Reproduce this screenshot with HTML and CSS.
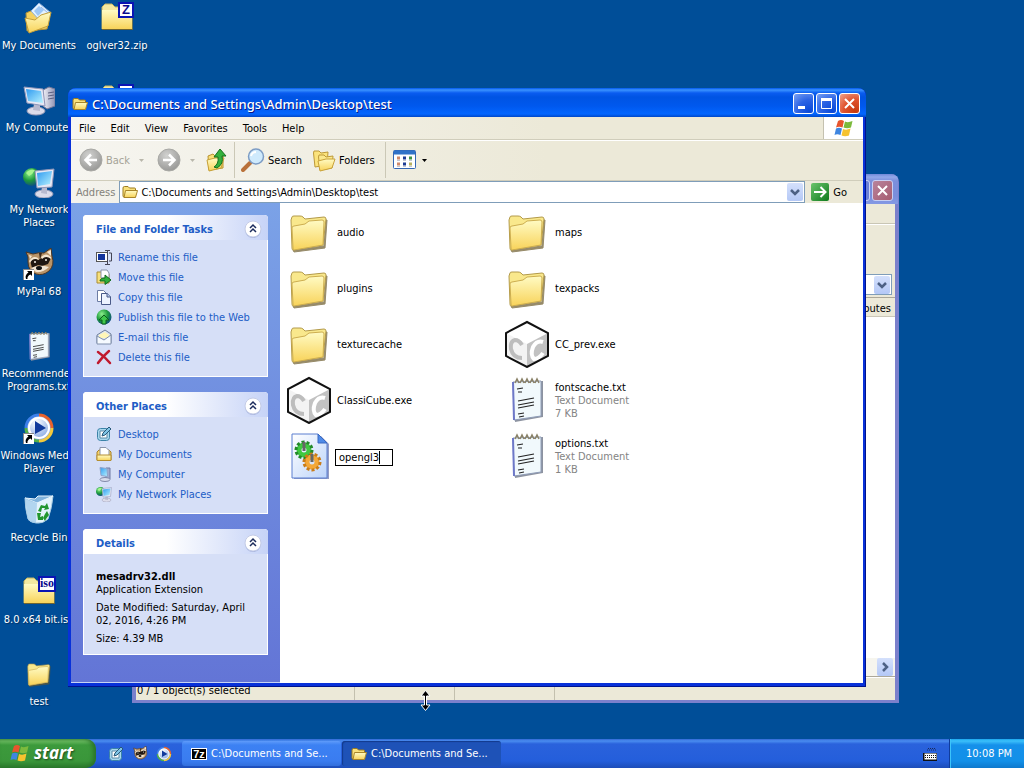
FILE: index.html
```html
<!DOCTYPE html>
<html lang="en">

	<head>
		<meta charset="utf-8" />
		<title>C:\Documents and Settings\Admin\Desktop\test</title>
		<link rel="stylesheet" href="styles.css">
	</head>

	<body>
		<!-- shared icons -->
		<svg class="defs" aria-hidden="true">
			<defs>
				<linearGradient id="gFolder" x1="0" y1="0" x2="0" y2="1">
					<stop offset="0" stop-color="#fffbc4" />
					<stop offset="1" stop-color="#f8d35a" />
				</linearGradient>
				<linearGradient id="gScreen" x1="0" y1="0" x2="1" y2="1">
					<stop offset="0" stop-color="#2f9af0" />
					<stop offset="1" stop-color="#b6f2ff" />
				</linearGradient>
				<linearGradient id="gCase" x1="0" y1="0" x2="1" y2="0">
					<stop offset="0" stop-color="#f2f2f8" />
					<stop offset="1" stop-color="#9094b4" />
				</linearGradient>
				<linearGradient id="gPage" x1="0" y1="0" x2="1" y2="1">
					<stop offset="0" stop-color="#ffffff" />
					<stop offset="1" stop-color="#bcd4fa" />
				</linearGradient>
				<linearGradient id="gGo" x1="0" y1="0" x2="1" y2="1">
					<stop offset="0" stop-color="#6cc46c" />
					<stop offset="1" stop-color="#0d7a1c" />
				</linearGradient>
				<radialGradient id="gGlobe" cx="0.35" cy="0.3" r="0.8">
					<stop offset="0" stop-color="#8cf08c" />
					<stop offset="0.5" stop-color="#1e9a3c" />
					<stop offset="1" stop-color="#0c3f8c" />
				</radialGradient>
				<radialGradient id="gGrey" cx="0.4" cy="0.3" r="0.8">
					<stop offset="0" stop-color="#d2d2d0" />
					<stop offset="1" stop-color="#929290" />
				</radialGradient>
				<radialGradient id="gBall" cx="0.4" cy="0.3" r="0.7">
					<stop offset="0" stop-color="#ffffff" />
					<stop offset="1" stop-color="#7a9fe0" />
				</radialGradient>
			</defs>

			<symbol id="folder" viewBox="0 0 48 48">
				<path d="M8 42 L39 38 L41 12 L42 12 L40 40 L9 44z" fill="#6b5a2a" stroke="#6b5a2a" opacity="0.7" />
				<path d="M6 12 L7 9 Q7 8 9 8 L15 8 Q17 8 18 9 L20 11 L39 9 Q41 9 41 11 L38 37 L8 42 Q7 42 7 40z" fill="#f9e88c" stroke="#b39a4a" />
				<path d="M7 20 Q7 18 9 18 L20 16 L24 13 L37 12 Q39 12 39 14 L38 37 L9 42 Q8 42 8 40z" fill="url(#gFolder)" stroke="#cdae50" />
			</symbol>

			<symbol id="folder-s" viewBox="0 0 16 16">
				<path d="M1 4 Q1 2.500 2.500 2.500 H6 L7.500 4 H12.500 Q13.500 4 13.500 5 V13 H2 Q1 13 1 12z" fill="#f9e07a" stroke="#9b7a1e" />
				<path d="M3.500 6.500 H15.500 L13.500 13.500 H2z" fill="url(#gFolder)" stroke="#a8852a" />
			</symbol>

			<symbol id="cube" viewBox="0 0 48 48">
				<path d="M24 2 L45 13 V36 L24 47 L3 36 V13z" fill="#fff" />
				<path d="M24 24 L45 13 V36 L24 47z" fill="#c2c2c2" />
				<path d="M3 13 L24 24 V47 L3 36z" fill="#f3f3f3" />
				<path d="M19 25 Q16 20 12 20 Q7 21 8 29 Q10 38 19 38" fill="none" stroke="#bdbdbd" stroke-width="4" />
				<path d="M40 22 Q34 20 30 27 Q27 35 31 39 Q36 39 40 33" fill="none" stroke="#fff" stroke-width="4" />
				<path d="M24 2 L45 13 V36 L24 47 L3 36 V13z" fill="none" stroke="#111" stroke-width="2" />
			</symbol>

			<symbol id="notepad" viewBox="0 0 48 48">
				<path d="M11 6 L40 5 V41 L12 46z" fill="#8d93a0" />
				<path d="M10 6 L38 5 L38 40 L11 44z" fill="#f1f9fc" stroke="#8f9db8" />
				<path d="M10 6 L11 44" stroke="#6d78c8" stroke-width="2" />
				<path d="M12 7 l2-4 l2 4 M17 7 l2-4 l2 4 M22 7 l2-4 l2 4 M27 7 l2-4 l2 4 M32 7 l2-4 l2 4" fill="none" stroke="#8a8268" stroke-width="1.500" />
				<path d="M14 13l6-1M15 16h4M15 25l16-3M15 29l16-3M15 32l16-3M15 38l6-1M16 41l5-1" stroke="#222" stroke-width="1.200" />
			</symbol>

			<symbol id="dll" viewBox="0 0 48 48">
				<path d="M9 4 H36 L44 12 V47 H9z" fill="#4a5aa0" opacity="0.6" />
				<path d="M7 2 H33 L42 11 V46 H7z" fill="url(#gPage)" stroke="#5b7ed0" />
				<path d="M33 2 V11 H42z" fill="#4f8be8" stroke="#3a68c0" />
				<circle cx="19" cy="18" r="5" fill="none" stroke="#3fc840" stroke-width="5" />
				<circle cx="19" cy="18" r="8" fill="none" stroke="#228a28" stroke-width="3" stroke-dasharray="3 2" />
				<circle cx="27" cy="30" r="5" fill="none" stroke="#f4a838" stroke-width="5" />
				<circle cx="27" cy="30" r="8" fill="none" stroke="#c97c18" stroke-width="3" stroke-dasharray="3 2" />
				<path d="M19 10v9M27 22v8" stroke="#666" stroke-width="3" />
			</symbol>

			<symbol id="computer" viewBox="0 0 32 32">
				<path d="M20 6 L26 3 L32 5 V22 L24 25 L20 22z" fill="url(#gCase)" stroke="#74789a" />
				<path d="M25 9l6-1M25 12l6-1M25 15l6-1" stroke="#5c6080" />
				<ellipse cx="13" cy="27" rx="9" ry="4" fill="#dcdcea" stroke="#9a9cb8" />
				<path d="M11 20 L17 21 L17 27 L10 26z" fill="#b8bacf" />
				<path d="M1 3 L20 5 L22 22 L4 19z" fill="#e6e8f4" stroke="#9096b8" />
				<path d="M3 5 L18 7 L20 19 L5 17z" fill="url(#gScreen)" />
			</symbol>

			<symbol id="computer-s" viewBox="0 0 16 16">
				<path d="M10 2h4v11h-4z" fill="#a3acd0" stroke="#6f7aa4" />
				<ellipse cx="9" cy="13.500" rx="5" ry="2" fill="#d8dcec" stroke="#8088a8" />
				<path d="M4 1.500 L11 2.500 L11.500 10.500 L5 9.500z" fill="url(#gScreen)" stroke="#8fa4cc" />
			</symbol>

			<symbol id="network" viewBox="0 0 32 32">
				<circle cx="9" cy="11" r="9" fill="url(#gGlobe)" />
				<path d="M3 7 Q7 2 12 4 Q10 8 6 10z" fill="#a6f58e" />
				<ellipse cx="21" cy="28" rx="9" ry="4" fill="#dcdcea" stroke="#9a9cb8" />
				<path d="M19 21 L24 21 L24 28 L18 27z" fill="#b8bacf" />
				<path d="M12 5 L31 3 L29 21 L14 22z" fill="#e6e8f4" stroke="#9096b8" />
				<path d="M14 7 L29 5 L27 18 L15 20z" fill="url(#gScreen)" />
			</symbol>

			<symbol id="documents" viewBox="0 0 32 32">
				<path d="M3 11 L10 8 L27 12 L24 27 L4 29z" fill="#f5d160" stroke="#b0913a" />
				<path d="M8 9 L16 1 L28 11 L20 22z" fill="#e4f2ff" stroke="#8fb0dc" />
				<path d="M11 9 L16 4 L21 8 L15 14z" fill="#9cc6f6" />
				<path d="M18 5l7 6M22 12l3 2" stroke="#8fb6ec" />
				<path d="M2 16 L12 18 L18 13 L28 10 L25 24 L6 31z" fill="url(#gFolder)" stroke="#c49f3a" />
			</symbol>

			<symbol id="archive" viewBox="0 0 32 32">
				<path d="M1 27 V5 L4 2 H11 L14 5 H31 V27z" fill="#f3e9a0" stroke="#c3b460" />
				<path d="M1 8 H31 V27 H1z" fill="url(#gFolder)" />
				<path d="M1 27.500h31V10" fill="none" stroke="#6d6434" />
			</symbol>

			<symbol id="raccoon" viewBox="0 0 32 32">
				<path d="M5 9 L3 4 L10 6 Q16 4 21 5 L28 0 L29 8 Q32 17 26 23 Q20 28 13 26 Q5 23 5 14z" fill="#b99468" stroke="#4a3626" />
				<path d="M7 12 Q11 8 15 12 L19 10 Q24 6 28 10 L25 16 L19 18 L15 17 L9 20z" fill="#1f1711" />
				<path d="M24 4l4-2 v6zM6 7l3 1-2 3z" fill="#f5e6cf" />
				<path d="M6 13 Q10 7 15 10 L16 12 Q10 9 7 15zM18 9 Q23 4 28 9 L28 11 Q23 7 19 11z" fill="#f5e6cf" />
				<path d="M8 20 Q16 16 26 19 Q20 25 13 24z" fill="#f2e5d2" />
				<circle cx="12" cy="14" r="1" fill="#f5f1e8" />
				<circle cx="23" cy="12" r="1" fill="#f5f1e8" />
				<ellipse cx="16" cy="20" rx="3" ry="2" fill="#111" />
				<path d="M16 5l1 7 2-7z" fill="#3b2a1c" />
			</symbol>

			<symbol id="player" viewBox="0 0 32 32">
				<circle cx="16" cy="16" r="13" fill="url(#gBall)" />
				<path d="M3 16 A13 13 0 0 1 16 3" fill="none" stroke="#3d7fe8" stroke-width="3" />
				<path d="M16 3 A13 13 0 0 1 29 16" fill="none" stroke="#e8622c" stroke-width="3" />
				<path d="M29 16 A13 13 0 0 1 16 29" fill="none" stroke="#f3c93c" stroke-width="3" />
				<path d="M16 29 A13 13 0 0 1 3 16" fill="none" stroke="#54b048" stroke-width="3" />
				<circle cx="16" cy="16" r="10" fill="none" stroke="#fff" stroke-width="2" />
				<path d="M12 9 L23 16 L12 22z" fill="#123a9c" />
			</symbol>

			<symbol id="shortcut" viewBox="0 0 11 11">
				<path d="M0 0h11v11H0z" fill="#fff" />
				<path d="M0 0.500h11M0.500 0v11" stroke="#888" />
				<path d="M4 2h5v5L7.500 5.500Q4 7 4.500 10L3 10Q1.500 6 5.500 3.500z" fill="#000" />
			</symbol>

			<symbol id="bin" viewBox="0 0 32 32">
				<path d="M2 4 Q8 8 14 8 L30 2 Q29 14 25 25 Q20 30 13 29 Q6 28 5 25 Q2 14 2 4z" fill="#e3f3fb" stroke="#a9cce4" />
				<path d="M2 4 L12 5 L15 2 L30 2 L14 9z" fill="#7fb2dc" stroke="#e9f6ff" />
				<path d="M14 9 L13 29 Q6 28 5 25 L2 4z" fill="#9cc8ea" opacity="0.7" />
				<path d="M15 17 L18 11 L22 12 L24 9 L26 15 L21 16 L22 14 L19 14 L18 18z" fill="#22962e" />
				<path d="M14 19 L18 19 L17 23 L20 22 L20 26 L15 26z" fill="#22962e" />
				<path d="M24 17 L26 21 L23 25 L22 27 L20 24 L22 20z" fill="#22962e" />
			</symbol>

			<symbol id="flag" viewBox="0 0 20 20">
				<path d="M4 3 Q7 1 10 3 L8.500 9.500 Q5 8 2 9.500z" fill="#e8552d" />
				<path d="M11 3.500 Q14 5 18.500 3 L17 9.500 Q13 11 9.500 9.500z" fill="#7cba3d" />
				<path d="M2 10.500 Q5 9 8 10.500 L6.500 17 Q3 15.500 0.500 17z" fill="#3f86e0" />
				<path d="M9 11 Q12.500 12.500 16.500 10.500 L15 17.500 Q11 19 7.500 17.500z" fill="#f6c32f" />
			</symbol>

			<symbol id="chevrons" viewBox="0 0 18 18">
				<circle cx="9" cy="10" r="8" fill="#8f9fce" opacity="0.6" />
				<circle cx="9" cy="9" r="8" fill="#fff" stroke="#c3cbe6" />
				<path d="M6 8l3-3 3 3M6 12l3-3 3 3" fill="none" stroke="#1c2c5c" stroke-width="1.500" />
			</symbol>

			<symbol id="down" viewBox="0 0 16 18">
				<path d="M4 7l4 4 4-4" fill="none" stroke="#4d6185" stroke-width="2.500" />
			</symbol>

			<symbol id="desk-s" viewBox="0 0 16 16">
				<rect x="1.500" y="2.500" width="12" height="12" rx="3" fill="#a8d8ee" stroke="#3c83a8" />
				<path d="M4 5h7v7H4z" fill="#fff" stroke="#5a8aa8" />
				<path d="M6 10l1-3 6-6 2 2-6 6z" fill="#7fc4e6" stroke="#285878" />
			</symbol>
		</svg>

		<main class="desktop">
			<ul class="shortcuts">
				<li class="shortcut"><svg class="pic"><use href="#documents" /></svg><span>My Documents</span></li>
				<li class="shortcut"><svg class="pic"><use href="#computer" /></svg><span>My Computer</span></li>
				<li class="shortcut"><svg class="pic"><use href="#network" /></svg><span>My Network Places</span></li>
				<li class="shortcut">
					<svg class="pic" viewBox="0 0 32 32"><use href="#raccoon" width="32" height="32" /><use href="#shortcut" y="21" width="11" height="11" /></svg>
					<span>MyPal 68</span>
				</li>
				<li class="shortcut"><svg class="pic"><use href="#notepad" /></svg><span>Recommended Programs.txt</span></li>
				<li class="shortcut">
					<svg class="pic" viewBox="0 0 32 32"><use href="#player" width="32" height="32" /><use href="#shortcut" y="21" width="11" height="11" /></svg>
					<span>Windows Media Player</span>
				</li>
				<li class="shortcut"><svg class="pic"><use href="#bin" /></svg><span>Recycle Bin</span></li>
				<li class="shortcut"><div class="pic badged"><svg class="pic"><use href="#archive" /></svg><b class="badge serif">iso</b></div><span>8.0 x64 bit.iso</span></li>
				<li class="shortcut"><svg class="pic small-folder"><use href="#folder" /></svg><span>test</span></li>
				<li class="shortcut"><div class="pic badged"><svg class="pic"><use href="#archive" /></svg><b class="badge">Z</b></div><span>oglver32.zip</span></li>
				<li class="shortcut"><div class="pic badged"><svg class="pic"><use href="#archive" /></svg><b class="badge"></b></div></li>
			</ul>

			<!-- 7-Zip window, inactive -->
			<section class="window zip" aria-label="7-Zip">
				<header class="titlebar">
					<div class="controls">
						<button class="ctl" aria-label="Maximize"></button>
						<button class="ctl close" aria-label="Close"><svg viewBox="0 0 19 19"><path d="M5 5l9 9M14 5l-9 9" /></svg></button>
					</div>
				</header>
				<div class="zip-body">
					<div class="zip-menu"></div>
					<div class="zip-tools"></div>
					<div class="zip-path"><button class="drop" aria-label="Path history"><svg><use href="#down" /></svg></button></div>
					<div class="zip-head">Attributes</div>
					<div class="zip-list"></div>
					<div class="zip-scroll"><button class="drop" aria-label="Scroll right"><svg viewBox="0 0 16 18"><path d="M6 5l4 4-4 4" fill="none" stroke="#4d6185" stroke-width="2.500" /></svg></button></div>
					<footer class="zip-status"><span class="wide">0 / 1 object(s) selected</span><span></span><span></span></footer>
				</div>
			</section>

			<!-- Explorer window -->
			<section class="window explorer" aria-label="test">
				<header class="titlebar">
					<svg class="ico"><use href="#folder-s" /></svg>
					<h1>C:\Documents and Settings\Admin\Desktop\test</h1>
					<div class="controls">
						<button class="ctl" aria-label="Minimize"><svg viewBox="0 0 19 19"><path d="M4 13.500h7" stroke-width="3" /></svg></button>
						<button class="ctl" aria-label="Maximize"><svg viewBox="0 0 19 19"><path d="M4.500 5v9.500h10V5" stroke-width="1" /><path d="M4 5.500h11" stroke-width="3" /></svg></button>
						<button class="ctl close" aria-label="Close"><svg viewBox="0 0 19 19"><path d="M5 5l9 9M14 5l-9 9" /></svg></button>
					</div>
				</header>

				<div class="menubar">
					<nav>
						<button>File</button>
						<button>Edit</button>
						<button>View</button>
						<button>Favorites</button>
						<button>Tools</button>
						<button>Help</button>
					</nav>
					<div class="brand"><svg class="flag"><use href="#flag" /></svg></div>
				</div>

				<div class="toolbar">
					<button class="tool back" disabled>
						<svg class="round" viewBox="0 0 24 24"><circle cx="12" cy="12" r="11" fill="url(#gGrey)" stroke="#a8a8a4" /><path d="M18 12H7M12 6.500L6.500 12l5.500 5.500" fill="none" stroke="#fff" stroke-width="2.500" /></svg>
						Back
						<svg class="tri" viewBox="0 0 5 3"><path d="M0 0h5L2.500 3z" /></svg>
					</button>
					<button class="tool forward" disabled aria-label="Forward">
						<svg class="round" viewBox="0 0 24 24"><circle cx="12" cy="12" r="11" fill="url(#gGrey)" stroke="#a8a8a4" /><path d="M6 12h11M12 6.500l5.500 5.500-5.500 5.500" fill="none" stroke="#fff" stroke-width="2.500" /></svg>
						<svg class="tri" viewBox="0 0 5 3"><path d="M0 0h5L2.500 3z" /></svg>
					</button>
					<button class="tool up" aria-label="Up">
						<svg class="round" viewBox="0 0 24 24">
							<path d="M4 8 L9 6 L11 8 H19 V20 L5 22z" fill="#f9e07a" stroke="#b8922e" />
							<path d="M3 12 L11 10 H20 L17 20 L5 23z" fill="url(#gFolder)" stroke="#c59f36" />
							<path d="M10 19 Q15 16 14 9 L10 9 L16 1 L22 8 L18 8 Q20 16 13 20z" fill="#35b13c" stroke="#14701c" />
						</svg>
					</button>
					<button class="tool search">
						<svg class="round" viewBox="0 0 24 24">
							<path d="M9 15 L2 22" stroke="#b9713a" stroke-width="4" stroke-linecap="round" />
							<circle cx="15" cy="8.500" r="7.500" fill="#cfeafc" stroke="#7d9cc4" stroke-width="1.500" />
							<path d="M10 8 Q11 4 15 4" fill="none" stroke="#fff" stroke-width="2" />
						</svg>
						Search
					</button>
					<button class="tool folders">
						<svg class="round" viewBox="0 0 24 24">
							<path d="M1.500 5 L2 3 H7 L9 5 L16 4 L15 17 L3 19z" fill="#fbe37c" stroke="#bd9938" />
							<path d="M6.500 9 L7 7 H12 L14 9 L21 8 L20 20 L8 22z" fill="#fbe88c" stroke="#bd9938" />
							<path d="M6 13 L14 11 H23 L20 20 L8 23z" fill="url(#gFolder)" stroke="#c8a23a" />
						</svg>
						Folders
					</button>
					<button class="tool views" aria-label="Views">
						<svg class="round" viewBox="0 0 24 24">
							<rect x="0.500" y="2.500" width="22" height="18" rx="1" fill="#fff" stroke="#3467b4" />
							<path d="M1 4.500h21" stroke="#2f72c8" stroke-width="4" />
							<path d="M4 10h3M4 16h3" stroke="#d08a6a" stroke-width="3" />
							<path d="M10 10h3M10 16h3" stroke="#1d3c94" stroke-width="3" />
							<path d="M16 10h3" stroke="#3c9146" stroke-width="3" />
							<path d="M16 16h3" stroke="#b8b060" stroke-width="3" />
							<path d="M4 12.500h3M10 12.500h3M16 12.500h3M4 18.500h3M10 18.500h3M16 18.500h3" stroke="#c2c6d0" />
						</svg>
						<svg class="tri" viewBox="0 0 5 3"><path d="M0 0h5L2.500 3z" /></svg>
					</button>
				</div>

				<div class="addressbar">
					<label for="address">Address</label>
					<div class="address">
						<svg class="ico"><use href="#folder-s" /></svg>
						<input id="address" type="text" value="C:\Documents and Settings\Admin\Desktop\test">
						<button class="drop" aria-label="Address history"><svg><use href="#down" /></svg></button>
					</div>
					<button class="go">
						<svg viewBox="0 0 18 18"><rect width="18" height="18" rx="2" fill="url(#gGo)" /><path d="M3 9h11M9.500 4l5 5-5 5" fill="none" stroke="#fff" stroke-width="2" /></svg>
						Go
					</button>
				</div>

				<div class="content">
					<aside class="tasks">
						<section class="panel">
							<h2><span>File and Folder Tasks</span><button aria-label="Collapse"><svg><use href="#chevrons" /></svg></button></h2>
							<ul>
								<li><a href="#"><svg class="ico" viewBox="0 0 16 16"><rect x="0.500" y="3.500" width="11" height="9" fill="#fff" stroke="#555" /><path d="M2 5h7v6H2z" fill="#12339c" /><path d="M9 1.500h5M9 15.500h5M11.500 2v13M13 4h2.500v8H13" fill="none" stroke="#445" /></svg>Rename this file</a></li>
								<li><a href="#"><svg class="ico" viewBox="0 0 16 16"><path d="M1 3 H6 L8 5 H13 V14 H1z" fill="#f7e07c" stroke="#a98c34" /><path d="M5 1h6l2 3v5H5z" fill="#fff" stroke="#8a94aa" /><path d="M4 12 Q4 9 9 9 V6 L15 11 L9 15.500 V12z" fill="#2fae3a" stroke="#116a1c" /></svg>Move this file</a></li>
								<li><a href="#"><svg class="ico" viewBox="0 0 16 16"><path d="M1.500 1.500h6l3 3v8h-9z" fill="#fff" stroke="#6c7ca4" /><path d="M5.500 4.500h6l3 3v8h-9z" fill="#eef4ff" stroke="#4a5a88" /><path d="M11 4v4h4" fill="#b4c6ea" stroke="#4a5a88" /></svg>Copy this file</a></li>
								<li><a href="#"><svg class="ico" viewBox="0 0 16 16"><circle cx="8" cy="8" r="7.500" fill="url(#gGlobe)" /><path d="M8 6l5 5h-3v4H6v-4H3z" fill="#3fc84c" stroke="#0c5c1a" /></svg>Publish this file to the Web</a></li>
								<li><a href="#"><svg class="ico" viewBox="0 0 16 16"><path d="M1 6 L9 1 L15 5 V14 H1z" fill="#dce4f0" stroke="#70809c" /><path d="M3 6 L9 3 L13 6 V9 H3z" fill="#fff6b8" /><path d="M1 7l7 4 7-5v9H1z" fill="#f6faff" stroke="#8090ac" /></svg>E-mail this file</a></li>
								<li><a href="#"><svg class="ico" viewBox="0 0 16 16"><path d="M2 3 Q8 7 14 14M13 2 Q7 7 2 14" fill="none" stroke="#c0192e" stroke-width="2.500" stroke-linecap="round" /></svg>Delete this file</a></li>
							</ul>
						</section>
						<section class="panel">
							<h2><span>Other Places</span><button aria-label="Collapse"><svg><use href="#chevrons" /></svg></button></h2>
							<ul>
								<li><a href="#"><svg class="ico"><use href="#desk-s" /></svg>Desktop</a></li>
								<li><a href="#"><svg class="ico" viewBox="0 0 16 16"><path d="M1 6 L3 4 H13 L15 6 V14 H1z" fill="#f7d36c" stroke="#a8802a" /><path d="M4 1.500h6l3 3V11H4z" fill="#fff" stroke="#8a94aa" /><path d="M1 9h14v5.500H1z" fill="url(#gFolder)" stroke="#b58e30" /></svg>My Documents</a></li>
								<li><a href="#"><svg class="ico"><use href="#computer-s" /></svg>My Computer</a></li>
								<li><a href="#"><svg class="ico"><use href="#network" /></svg>My Network Places</a></li>
							</ul>
						</section>
						<section class="panel">
							<h2><span>Details</span><button aria-label="Collapse"><svg><use href="#chevrons" /></svg></button></h2>
							<div class="details">
								<p><b>mesadrv32.dll</b><br>Application Extension</p>
								<p>Date Modified: Saturday, April 02, 2016, 4:26 PM</p>
								<p>Size: 4.39 MB</p>
							</div>
						</section>
					</aside>

					<ul class="files">
						<li><svg><use href="#folder" /></svg><p>audio</p></li>
						<li><svg><use href="#folder" /></svg><p>maps</p></li>
						<li><svg><use href="#folder" /></svg><p>plugins</p></li>
						<li><svg><use href="#folder" /></svg><p>texpacks</p></li>
						<li><svg><use href="#folder" /></svg><p>texturecache</p></li>
						<li><svg><use href="#cube" /></svg><p>CC_prev.exe</p></li>
						<li><svg><use href="#cube" /></svg><p>ClassiCube.exe</p></li>
						<li><svg><use href="#notepad" /></svg><p>fontscache.txt<small>Text Document</small><small>7 KB</small></p></li>
						<li><svg><use href="#dll" /></svg><div class="rename"><input type="text" aria-label="New name" value="opengl3"><i class="caret"></i></div></li>
						<li><svg><use href="#notepad" /></svg><p>options.txt<small>Text Document</small><small>1 KB</small></p></li>
					</ul>
				</div>
			</section>

			<svg class="cursor" viewBox="0 0 11 21" aria-hidden="true">
				<path d="M5.500 0.500 L10 6 H6.500 V15 H10 L5.500 20.500 L1 15 H4.500 V6 H1z" fill="#000" stroke="#fff" />
				<path d="M5.500 4v13" stroke="#000" />
			</svg>
		</main>

		<footer class="taskbar">
			<button class="start"><svg class="flag"><use href="#flag" /></svg>start</button>
			<div class="quick">
				<button aria-label="Show Desktop"><svg class="ico"><use href="#desk-s" /></svg></button>
				<button aria-label="MyPal 68"><svg class="ico"><use href="#raccoon" /></svg></button>
				<button aria-label="Windows Media Player"><svg class="ico"><use href="#player" /></svg></button>
			</div>
			<div class="apps">
				<button class="app"><span class="seven">7z</span>C:\Documents and Se...</button>
				<button class="app active"><svg class="ico"><use href="#folder-s" /></svg>C:\Documents and Se...</button>
			</div>
			<svg class="keyboard" viewBox="0 0 14 13"><path d="M4 2h9M5 0.500h7" stroke="#1a2a5a" stroke-dasharray="1 1" /><path d="M0 5h14v8H0z" fill="#111" /><path d="M1.500 5.500h12v6h-12z" fill="#fff" /><path d="M2 7.500h11M2 9.500h11" stroke="#111" stroke-dasharray="1 1" /></svg>
			<time class="clock">10:08 PM</time>
		</footer>
	</body>

</html>
```
FILE: styles.css
```css
* {
	box-sizing: border-box;
}

html,
body {
	height: 100%;
}

body,
ul,
h1,
h2,
p {
	margin: 0;
	padding: 0;
}

body {
	display: flex;
	flex-direction: column;
	overflow: hidden;
	background: #004e98;
	font: 11px/13px Tahoma, "DejaVu Sans Condensed", sans-serif;
	color: #000;
}

ul {
	list-style: none;
}

button,
input {
	margin: 0;
	padding: 0;
	border: 0;
	background: none;
	font: inherit;
	color: inherit;
}

input {
	outline: 0;
	min-width: 0;
}

a {
	text-decoration: none;
}

svg {
	display: block;
	flex: none;
}

.defs {
	position: absolute;
	width: 0;
	height: 0;
}

.ico {
	width: 16px;
	height: 16px;
}

.flag {
	width: 20px;
	height: 20px;
}

/* desktop */
.desktop {
	position: relative;
	flex: 1;
	min-height: 0;
}

.shortcuts {
	display: grid;
	grid-auto-flow: column;
	grid-template-rows: repeat(9, 82px);
	grid-auto-columns: 78px;
	height: 100%;
}

.shortcut {
	display: flex;
	flex-direction: column;
	align-items: center;
	gap: 5px;
	padding-top: 2px;
	color: #fff;
	text-align: center;
	text-shadow: 1px 1px 1px #00305e;
}

.pic {
	width: 32px;
	height: 32px;
}

.small-folder {
	padding: 1px;
}

.badged {
	position: relative;
}

.badge {
	position: absolute;
	top: 0;
	right: -1px;
	min-width: 16px;
	height: 16px;
	border: 2px solid #0a14b4;
	background: #fff;
	color: #0a0a8c;
	font: bold 13px/12px "Liberation Sans", sans-serif;
	text-shadow: none;
}

.badge.serif {
	font: bold 12px/11px "Liberation Serif", serif;
}

/* window frame */
.window {
	position: absolute;
	display: flex;
	flex-direction: column;
	border-radius: 8px 8px 0 0;
	overflow: hidden;
}

.explorer {
	inset: 88px 158px 52px 68px;
	padding: 0 3px 4px;
	background: #0831d9;
	box-shadow: inset -1px -1px #00138c, inset 1px 0 #0831d9;
}

.zip {
	inset: 174px 125px 36px 132px;
	padding: 0 4px 3px;
	background: #7b80cc;
}

.titlebar {
	display: flex;
	align-items: center;
	flex: none;
	height: 29px;
	margin: 0 -3px;
	padding: 2px 6px 0 4px;
	background: linear-gradient(#0058ee 0, #3a93ff 2px, #0a5cf0 5px, #0054e3 9px, #0058ee 18px, #0366ff 26px, #0047c8 29px);
	color: #fff;
}

.zip .titlebar {
	height: 30px;
	padding-right: 5px;
	background: linear-gradient(#7088d8 0, #93a8ea 3px, #7b8fdc 7px, #7a8edc 22px, #8499e4 30px);
}

.titlebar h1 {
	flex: 1;
	margin-left: 4px;
	font: 500 13px/16px "Trebuchet MS", "Noto Sans", sans-serif;
	text-shadow: 1px 1px #0a1883;
}

.controls {
	display: flex;
	gap: 2px;
	margin-left: auto;
}

.ctl {
	width: 21px;
	height: 21px;
	border: 1px solid #fff;
	border-radius: 3px;
	background: radial-gradient(circle at 80% 90%, #0a49d8, #2c63e4 50%, #7aa2f4);
}

.ctl svg {
	width: 19px;
	height: 19px;
	fill: none;
	stroke: #fff;
	stroke-width: 2;
}

.ctl.close {
	background: radial-gradient(circle at 80% 90%, #c63a10, #e0522e 50%, #f0a48c);
}

.zip .ctl {
	border-color: #c8d0f4;
	background: #6a80d8;
}

.zip .ctl.close {
	background: linear-gradient(135deg, #b8839c, #a65c70);
}

/* explorer bars */
.menubar {
	display: flex;
	justify-content: space-between;
	height: 23px;
	background: linear-gradient(90deg, #f7f6f2, #ece9d8 60%);
	border-bottom: 1px solid #d0cdbb;
}

.menubar nav {
	display: flex;
	gap: 15px;
	padding-left: 8px;
}

.brand {
	display: flex;
	align-items: center;
	justify-content: center;
	width: 40px;
	background: #fff;
	border-left: 1px solid #c4c1b0;
}

.toolbar {
	display: flex;
	height: 41px;
	padding: 1px 8px 2px;
	background: linear-gradient(90deg, #f6f5f0, #ece9d8 60%);
	border-top: 1px solid #fff;
	border-bottom: 1px solid #d0cdbb;
}

.tool {
	display: flex;
	align-items: center;
	gap: 3px;
}

.tool:disabled {
	color: #a5a397;
}

.round {
	width: 24px;
	height: 24px;
}

.tri {
	width: 5px;
	height: 3px;
	margin-left: 2px;
}

.tool:disabled .tri {
	margin-left: 6px;
	fill: #b9b7ab;
}

.forward {
	margin-left: 13px;
}

.up {
	margin-left: 9px;
	padding-right: 6px;
	border-right: 1px solid #cbc8b6;
}

.search {
	padding-left: 6px;
}

.folders {
	margin-left: 10px;
	padding-right: 10px;
	border-right: 1px solid #cbc8b6;
}

.views {
	padding-left: 7px;
}

.addressbar {
	display: flex;
	align-items: center;
	height: 22px;
	padding: 0 16px 0 5px;
	gap: 4px;
	background: linear-gradient(90deg, #f3f2ec, #ece9d8 60%);
}

.addressbar label {
	color: #84827a;
}

.address {
	display: flex;
	align-items: center;
	flex: 1;
	height: 22px;
	gap: 3px;
	padding: 0 0 0 2px;
	border: 1px solid #7f9db9;
	background: #fff;
}

.address input {
	flex: 1;
}

.drop {
	width: 16px;
	height: 18px;
	margin-right: 1px;
	border-radius: 2px;
	background: linear-gradient(#d4e0fc, #b4c8f6);
}

.drop svg {
	width: 16px;
	height: 18px;
}

.go {
	display: flex;
	align-items: center;
	gap: 4px;
	margin-left: 2px;
}

.go svg {
	width: 18px;
	height: 18px;
}

.content {
	display: flex;
	flex: 1;
	min-height: 0;
	background: #fff;
}

/* task pane */
.tasks {
	display: flex;
	flex-direction: column;
	gap: 15px;
	flex: none;
	width: 209px;
	padding: 12px;
	background: linear-gradient(#7ba2e7, #6375d6);
	border-bottom: 1px solid #c8d4f4;
}

.panel {
	border-radius: 4px 4px 0 0;
	overflow: hidden;
	background: #d6dff7;
	box-shadow: inset 0 0 0 1px #fff;
}

.panel h2 {
	display: flex;
	justify-content: space-between;
	height: 25px;
	padding: 3px 6px 0 13px;
	background: linear-gradient(90deg, #fff 45%, #c6d3f7);
	color: #215dc6;
	font-size: 11px;
}

.panel h2 span {
	padding-top: 5px;
}

.panel h2 svg {
	width: 18px;
	height: 18px;
}

.panel ul {
	padding: 7px 13px 10px;
}

.panel a {
	display: flex;
	align-items: center;
	gap: 6px;
	height: 20px;
	color: #215dc6;
	white-space: nowrap;
}

.details {
	display: grid;
	gap: 5px;
	padding: 16px 13px 10px;
}

/* file list */
.files {
	flex: 1;
	display: grid;
	grid-template-columns: repeat(auto-fill, 218px);
	grid-auto-rows: 56px;
	padding: 1px 0 0 5px;
}

.files li {
	display: flex;
	align-items: center;
	gap: 4px;
}

.files svg {
	width: 48px;
	height: 48px;
}

.files small {
	display: block;
	font-size: 11px;
	color: #848484;
}

.rename {
	display: flex;
	align-items: center;
	width: 58px;
	height: 17px;
	margin: 2px 0 0 -2px;
	padding-left: 3px;
	border: 1px solid #000;
}

.rename input {
	width: 40px;
}

.caret {
	width: 1px;
	height: 13px;
	background: #000;
}

/* 7-zip window */
.zip-body {
	display: flex;
	flex-direction: column;
	flex: 1;
	background: #ece9d8;
}

.zip-menu {
	height: 20px;
	border-bottom: 1px solid #c9c6b5;
}

.zip-tools {
	height: 50px;
	border-top: 1px solid #fff;
}

.zip-path {
	display: flex;
	justify-content: flex-end;
	align-items: center;
	height: 21px;
	margin: 0 3px 2px;
	border: 1px solid #7f9db9;
	background: #fff;
}

.zip-head {
	height: 20px;
	padding: 4px 4px 0 0;
	border-top: 1px solid #aca899;
	border-bottom: 1px solid #cbc7b8;
	text-align: right;
}

.zip-list {
	flex: 1;
	background: #fff;
}

.zip-scroll {
	display: flex;
	justify-content: flex-end;
	padding-right: 1px;
	background: #f6f5ee;
	border-bottom: 1px solid #aca899;
}

.zip-status {
	display: flex;
	height: 23px;
	padding: 6px 0 0 1px;
	border-top: 1px solid #fff;
}

.zip-status span {
	width: 100px;
	border-right: 1px solid #c3c0ae;
}

.zip-status .wide {
	width: 218px;
}

.cursor {
	position: absolute;
	left: 420px;
	top: 690px;
	width: 11px;
	height: 21px;
}

/* taskbar */
.taskbar {
	display: flex;
	align-items: stretch;
	flex: none;
	height: 29px;
	background: linear-gradient(#3168d5 0, #4a8df0 2px, #2a62dc 5px, #245edb 22px, #1d4db8 29px);
	color: #fff;
}

.start {
	display: flex;
	align-items: center;
	gap: 4px;
	width: 96px;
	padding: 0 0 2px 10px;
	border-radius: 0 10px 10px 0;
	background: linear-gradient(#5eac56 0, #6cbc62 2px, #3c9a3c 6px, #3a963a 22px, #2a7a2c 29px);
	box-shadow: inset -3px 0 4px #2a742a;
	font: italic bold 17px/20px "Franklin Gothic Medium", "Open Sans", sans-serif;
	text-shadow: 1px 1px 2px #1c4a1c;
}

.quick {
	display: flex;
	align-items: center;
	gap: 8px;
	padding: 0 10px 0 12px;
}

.apps {
	display: flex;
	flex: 1;
	gap: 1px;
	padding: 2px 0;
}

.app {
	display: flex;
	align-items: center;
	gap: 4px;
	width: 159px;
	padding: 0 9px;
	border-radius: 3px;
	background: linear-gradient(#5f9bfa, #3c81f3 4px, #3a7cf0 20px, #326fdc);
	white-space: nowrap;
}

.app.active {
	background: #1e52b7;
	box-shadow: inset 1px 1px 1px #123a8c;
}

.seven {
	width: 16px;
	height: 12px;
	border: 1px solid #fff;
	background: #000;
	font: bold 11px/10px "Liberation Sans", sans-serif;
}

.keyboard {
	width: 14px;
	height: 13px;
	align-self: center;
	margin: 2px 12px 0 0;
}

.clock {
	display: flex;
	align-items: center;
	width: 75px;
	padding-left: 16px;
	border-left: 1px solid #103c9c;
	background: linear-gradient(#1aa6f0 0, #3cc0fa 2px, #1590ea 6px, #1290e8 22px, #0e78cc 29px);
	box-shadow: inset 1px 0 #3cc4fa;
}
```
